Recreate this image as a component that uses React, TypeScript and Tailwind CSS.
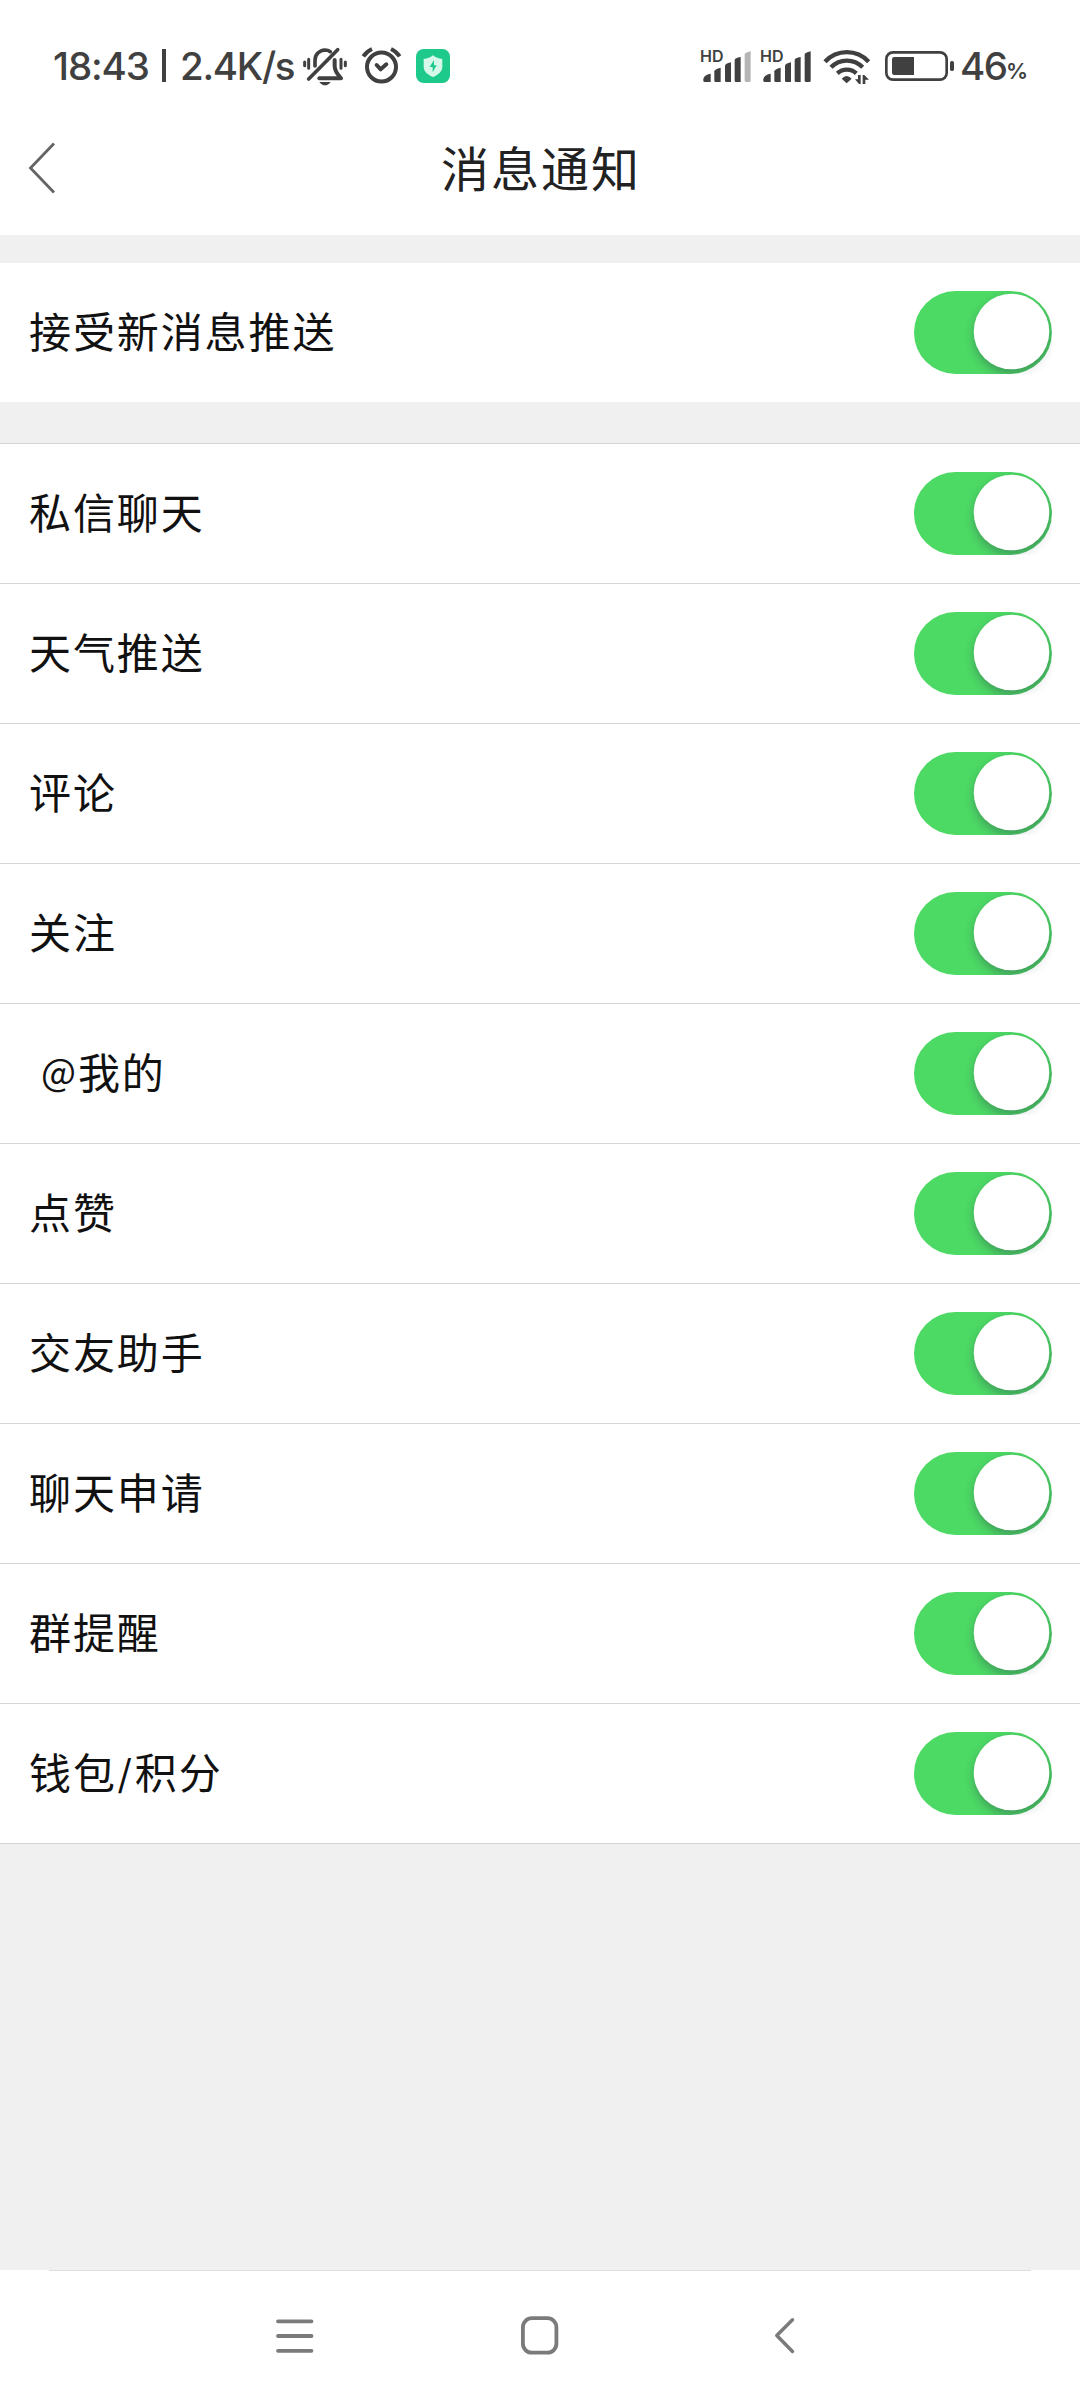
import React from "react";

const INK = "#404040";

function BellOffIcon() {
  return (
    <svg className="ml-[8px] mt-[46px] h-[40px] w-[46px] shrink-0" viewBox="36 48 138 120" fill="none" stroke={INK} strokeLinecap="round">
      <path d="M44 96V107M56 88V115M153 88V115M166 96V107" strokeWidth="9" />
      <path d="M75 108V92C75 73 88 61 105 60C112 60 117 62 121 65" strokeWidth="11" />
      <path d="M134 90V108C134 122 140 130 150 141" strokeWidth="12" />
      <path d="M88 144.500H153" strokeWidth="12" />
      <path d="M143 59L56 147" strokeWidth="11" />
      <path d="M88 156H122C117 163 111 166 105 166S93 163 88 156Z" fill={INK} stroke="none" />
    </svg>
  );
}

function AlarmIcon() {
  return (
    <svg className="ml-[13px] mt-[46px] h-[38px] w-[41px] shrink-0" viewBox="213 48 123 114" fill="none" stroke={INK}>
      <circle cx="274.500" cy="111" r="43.500" strokeWidth="12" />
      <path d="M220 79C227 69 235 62 246 57M303 57C314 62 322 69 329 79" strokeWidth="12" />
      <path d="M260 105L272 118L289 103" strokeWidth="12" strokeLinecap="round" strokeLinejoin="round" />
    </svg>
  );
}

function ShieldIcon() {
  return (
    <svg className="ml-[14px] mt-[49px] h-[34px] w-[34px] shrink-0" viewBox="378 57 102 102">
      <rect x="378" y="57" width="102" height="102" rx="23" fill="#1dca8c" />
      <path d="M429 76C437 83 446 86 457 87V110C457 125 444 134 429 141C414 134 401 125 401 110V87C412 86 421 83 429 76Z" fill="#d5f8ea" />
      <path d="M432 90L419 111H428V127L440 106H432Z" fill="#1dca8c" />
    </svg>
  );
}

function SignalIcon({ weak = false }: { weak?: boolean }) {
  return (
    <div className="relative mr-[9px] mt-[49px] h-[34px] w-[51px] shrink-0">
      <svg className="h-[34px] w-[51px]" viewBox="33 57 153 102" fill={INK}>
        <path d="M40 148C40 140 50 132 62 131V156H44Q40 156 40 152Z" />
        <path d="M73 124Q73 118 92 113V156H77Q73 156 73 152Z" />
        <path d="M105 108Q105 101 123 97V156H109Q105 156 105 152Z" />
        <path d="M134 90Q134 84 152 81V156H138Q134 156 134 152Z" />
        <path d="M164 74Q164 68 182 64V152Q182 156 178 156H168Q164 156 164 152Z" fill={weak ? "#b5b5b5" : INK} />
      </svg>
      <span className="absolute -left-px -top-[3px] text-[16px] font-semibold leading-[20px]">HD</span>
    </div>
  );
}

function WifiIcon() {
  return (
    <svg className="ml-[2px] mt-[48px] h-[37px] w-[48px] shrink-0" viewBox="399 54 144 111" fill="none" stroke={INK}>
      <path d="M405 95C441 57 500 57 536 95" strokeWidth="13" />
      <path d="M423 112C449 85 492 85 518 112" strokeWidth="13" />
      <path d="M442 130C458 115 483 115 499 130" strokeWidth="13" />
      <path d="M455 146Q470 130 485 146L470 160Z" fill={INK} stroke="none" />
      <path d="M512 135V162H507L495 148H504V135ZM518 162V135H523L537 149H526V162Z" fill={INK} stroke="none" />
    </svg>
  );
}

function BatteryIcon() {
  return (
    <svg className="ml-[14px] mt-[50px] h-[32px] w-[70px] shrink-0" viewBox="75 60 210 96" fill="none">
      <rect x="79" y="67" width="181" height="82" rx="20" stroke={INK} strokeWidth="8" />
      <path d="M103 81H162V135H103Q96 135 96 128V88Q96 81 103 81Z" fill={INK} />
      <rect x="270" y="93" width="12" height="30" rx="5" fill={INK} />
    </svg>
  );
}

function StatusBar() {
  return (
    <div className="flex h-[101px] items-start whitespace-nowrap font-['Inter',sans-serif] text-[38.500px] font-medium leading-[46px] text-[#404040]">
      <span className="ml-[53px] mt-[43px] w-[109px] shrink-0 tracking-[-1.100px]">18:43</span>
      <span className="mt-[49px] h-[33px] w-[4px] shrink-0 bg-[#404040]" />
      <span className="ml-[14px] mt-[43px] w-[114px] shrink-0 tracking-[-1.300px]">2.4K/s</span>
      <BellOffIcon />
      <AlarmIcon />
      <ShieldIcon />
      <div className="ml-auto flex w-[379px] items-start">
        <SignalIcon weak />
        <SignalIcon />
        <WifiIcon />
        <BatteryIcon />
        <span className="ml-[5px] mt-[43px] w-[46px] shrink-0 tracking-[-1.500px]">46</span>
        <span className="mt-[57px] shrink-0 text-[22px] font-semibold leading-[28px] tracking-[-1px]">%</span>
      </div>
    </div>
  );
}

function TitleBar() {
  return (
    <header className="flex h-[134px] items-center">
      <svg className="ml-[28px] h-[52px] w-[28px]" viewBox="0 0 28 52" fill="none" stroke="#646464" strokeWidth="2.800">
        <path d="M26 1.500L2.500 26L26 50.500" />
      </svg>
      <h1 className="mb-[5px] ml-[385px] text-[48px] leading-[60px] tracking-[2px] text-[#222]">消息通知</h1>
    </header>
  );
}

function Toggle() {
  return (
    <svg className="h-[83px] w-[138px] shrink-0" viewBox="0 0 138 83">
      <defs>
        <filter id="knob-shadow" x="-30%" y="-30%" width="160%" height="170%">
          <feGaussianBlur stdDeviation="5" />
        </filter>
      </defs>
      <rect width="138" height="83" rx="41.500" fill="#4cd964" />
      <circle cx="98.500" cy="45" r="38.500" fill="#2a3a4a" opacity="0.380" filter="url(#knob-shadow)" />
      <path d="M96.500 0A41.500 41.500 0 0 1 96.500 83H138V0Z" fill="#fff" opacity="0.700" />
      <circle cx="97.500" cy="40.500" r="37.800" fill="#fff" />
    </svg>
  );
}

function Row({ children }: { children: React.ReactNode }) {
  return (
    <div className="flex h-[139px] items-center justify-between bg-white pl-[29px] pr-[28px]">
      <span className="mb-[6px] whitespace-pre text-[42px] leading-[60px] tracking-[1.900px] text-[#111]">{children}</span>
      <Toggle />
    </div>
  );
}

const items: React.ReactNode[] = [
  "私信聊天",
  "天气推送",
  "评论",
  "关注",
  <span key="at" className="flex pl-[12px]">
    <span className="-mt-px text-[37px]">@</span>我的
  </span>,
  "点赞",
  "交友助手",
  "聊天申请",
  "群提醒",
  <span key="wallet" className="flex">
    钱包<span className="w-[18px] pl-[1px] text-[36px] font-medium">/</span>积分
  </span>,
];

function NavBar() {
  return (
    <nav className="h-[130px] bg-white">
      <div className="mx-[49px] h-px bg-[#dedede]" />
      <div className="flex h-[129px] items-center pl-[275px] text-[#7b7b7b]">
        <svg className="h-[40px] w-[40px]" viewBox="0 0 40 40" fill="none" stroke="currentColor" strokeWidth="3.800" strokeLinecap="round">
          <path d="M3 5.300H36.500M3 20H36.500M3 34.800H36.500" />
        </svg>
        <svg className="ml-[205px] h-[40px] w-[40px]" viewBox="0 0 40 40" fill="none" stroke="currentColor" strokeWidth="3.800">
          <rect x="2.900" y="2.200" width="33.500" height="34.500" rx="9" />
        </svg>
        <svg className="ml-[214px] h-[40px] w-[22px]" viewBox="0 0 22 40" fill="none" stroke="currentColor" strokeWidth="3.500" strokeLinecap="round" strokeLinejoin="round">
          <path d="M18.500 3.800L2.800 19.500L18.500 35.500" />
        </svg>
      </div>
    </nav>
  );
}

export default function App() {
  return (
    <div className="flex h-[2400px] w-[1080px] flex-col overflow-hidden bg-[#f0f0f0] font-['Noto_Sans_CJK_SC',sans-serif]">
      <div className="bg-white">
        <StatusBar />
        <TitleBar />
      </div>
      <div className="mt-[28px]">
        <Row>接受新消息推送</Row>
      </div>
      <div className="mt-[41px] flex flex-col gap-px bg-[#d6d6d6] py-px">
        {items.map((item, i) => (
          <Row key={i}>{item}</Row>
        ))}
      </div>
      <div className="grow" />
      <NavBar />
    </div>
  );
}
